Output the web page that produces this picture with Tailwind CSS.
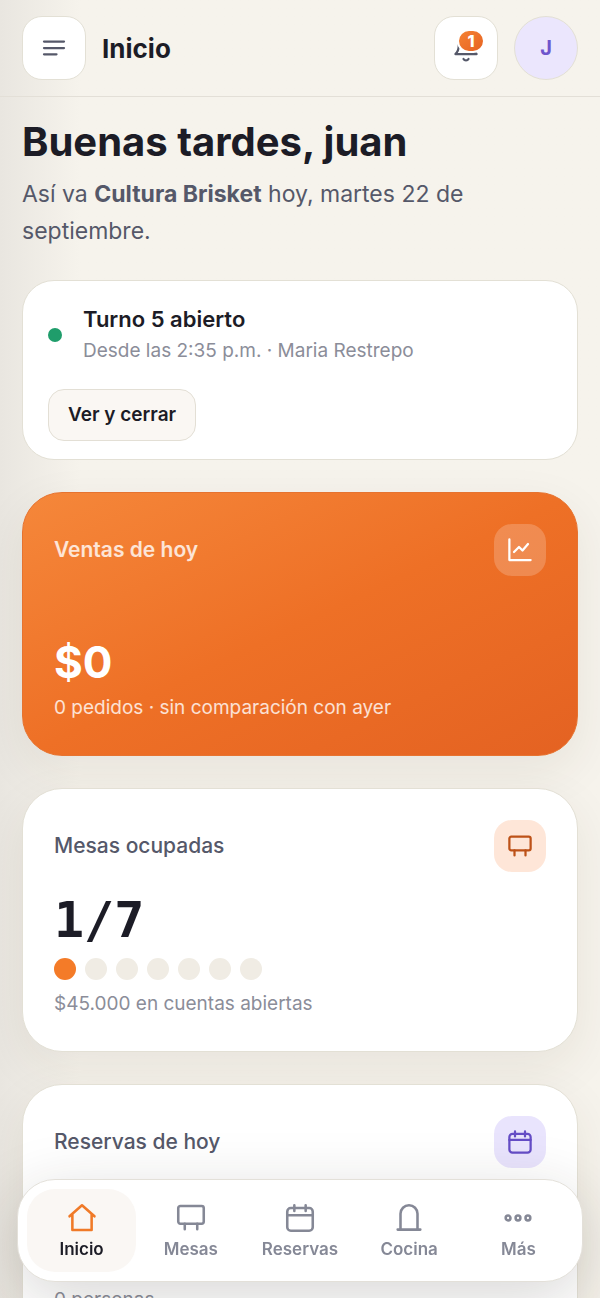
<!DOCTYPE html>
<html lang="es">
<head>
    <meta charset="UTF-8">
    <meta name="viewport" content="width=device-width, initial-scale=1.0">
    <title>Inicio</title>
    <script src="https://cdn.jsdelivr.net/npm/@tailwindcss/browser@4"></script>
</head>
<body class="h-screen overflow-hidden flex flex-col bg-[#f6f3ec] bg-linear-to-r from-[#e9e6e0] to-[#f6f3ec] to-[80px] font-['Inter',sans-serif] text-[#1c1c26]">
    <header class="shrink-0 flex items-center gap-4 px-[22px] py-4 border-b border-[#e3dfd7]">
        <button type="button" aria-label="Menú" class="size-16 rounded-[20px] bg-white border border-[#e3e0d5] flex items-center justify-center text-[#555869]">
            <svg class="size-[30px]" viewBox="0 0 24 24" fill="none" stroke="currentColor" stroke-width="1.8" stroke-linecap="round"><path d="M4 6.800h16M4 12h16M4 17h10"/></svg>
        </button>
        <span class="text-[26px] font-bold">Inicio</span>
        <div class="ml-auto flex gap-4">
            <button type="button" aria-label="Notificaciones" class="relative size-16 rounded-[20px] bg-white border border-[#e3e0d5] flex items-center justify-center text-[#555869]">
                <svg class="size-[30px]" viewBox="0 0 24 24" fill="none" stroke="currentColor" stroke-width="1.8" stroke-linecap="round" stroke-linejoin="round"><path d="M6.200 10a5.800 5.800 0 0 1 11.600 0c0 4.500 2.700 6.800 2.700 6.800h-17S6.200 14.500 6.200 10ZM10 20.800a2.300 2.300 0 0 0 4 0"/></svg>
                <span class="absolute top-3 right-3 h-6 w-7 rounded-full border-2 border-white bg-linear-to-br from-[#f58233] to-[#e66322] text-white text-base font-extrabold flex items-center justify-center">1</span>
            </button>
            <button type="button" class="size-16 rounded-full bg-[#ebe6fd] border border-[#e3e0d5] text-[#6d55cc] text-xl font-bold">J</button>
        </div>
    </header>

    <main class="flex-1 overflow-y-auto [scrollbar-width:none] px-[22px] pt-5 pb-32">
        <h1 class="text-[40px] leading-[50px] font-bold">Buenas tardes, juan</h1>
        <p class="mt-[9px] text-[23px] leading-[37px] text-[#555869]">Así va <strong class="font-bold">Cultura Brisket</strong> hoy, martes 22 de septiembre.</p>

        <div class="mt-[30px] flex flex-col gap-8">
            <section class="rounded-[32px] bg-white border border-[#e3e0d5] px-[25px] pt-[22px] pb-[18px] flex flex-col items-start gap-[22px]">
                <div class="flex items-center gap-[21px]">
                    <span class="size-3.5 rounded-full bg-[#1f9d6b]"></span>
                    <div>
                        <h2 class="text-[22px] leading-8 font-semibold">Turno 5 abierto</h2>
                        <p class="text-[19px] leading-8 text-[#8b8d99]">Desde las 2:35 p.m. · Maria Restrepo</p>
                    </div>
                </div>
                <button type="button" class="h-[52px] px-[19px] rounded-2xl bg-[#faf7f3] border border-[#e3dfd5] text-[19px] font-semibold">Ver y cerrar</button>
            </section>

            <section class="h-[264px] rounded-[40px] border border-[#e67330] bg-linear-to-br from-[#f5873a] via-[#ee7026] to-[#e46222] p-[31px] flex flex-col text-white shadow-[0_16px_48px_rgba(60,50,30,0.08)]">
                <div class="flex items-center justify-between">
                    <h2 class="text-[21px] font-semibold text-white/80">Ventas de hoy</h2>
                    <span class="size-[52px] rounded-[18px] bg-white/20 flex items-center justify-center">
                        <svg class="size-[30px]" viewBox="0 0 24 24" fill="none" stroke="currentColor" stroke-width="1.8" stroke-linecap="round" stroke-linejoin="round"><path d="M3.500 3.500V20h17M7.200 13.600l4-4 2.800 2.800 4.400-5.200"/></svg>
                    </span>
                </div>
                <div class="mt-auto text-[44px] leading-[60px] font-bold">$0</div>
                <p class="text-[19px] leading-8 text-white/80">0 pedidos · sin comparación con ayer</p>
            </section>

            <section class="rounded-[40px] bg-white border border-[#e3e0d5] p-[31px] shadow-[0_16px_48px_rgba(60,50,30,0.08)]">
                <div class="flex items-center justify-between">
                    <h2 class="text-[21px] font-medium text-[#555869]">Mesas ocupadas</h2>
                    <span class="size-[52px] rounded-[18px] bg-[#fee6d8] text-[#bd5218] flex items-center justify-center">
                        <svg class="size-[30px]" viewBox="0 0 24 24" fill="none" stroke="currentColor" stroke-width="1.8" stroke-linecap="round" stroke-linejoin="round"><rect x="3.500" y="4.500" width="17" height="11" rx="1.500"/><path d="M7.600 15.500v4M16.400 15.500v4"/></svg>
                    </span>
                </div>
                <div class="mt-[18px] text-[50px] leading-[60px] font-bold font-['DejaVu_Sans_Mono',monospace]">1/7</div>
                <div class="mt-2 flex gap-[9px]">
                    <span class="size-[22px] rounded-full bg-[#f47b28]"></span>
                    <span class="size-[22px] rounded-full bg-[#f0ece4]"></span>
                    <span class="size-[22px] rounded-full bg-[#f0ece4]"></span>
                    <span class="size-[22px] rounded-full bg-[#f0ece4]"></span>
                    <span class="size-[22px] rounded-full bg-[#f0ece4]"></span>
                    <span class="size-[22px] rounded-full bg-[#f0ece4]"></span>
                    <span class="size-[22px] rounded-full bg-[#f0ece4]"></span>
                </div>
                <p class="mt-2 text-[19px] leading-8 text-[#8b8d99]">$45.000 en cuentas abiertas</p>
            </section>

            <section class="h-[264px] rounded-[40px] bg-white border border-[#e3e0d5] p-[31px] flex flex-col justify-between shadow-[0_16px_48px_rgba(60,50,30,0.08)]">
                <div class="flex items-center justify-between">
                    <h2 class="text-[21px] font-medium text-[#555869]">Reservas de hoy</h2>
                    <span class="size-[52px] rounded-[18px] bg-[#e9e4fd] text-[#654dc6] flex items-center justify-center">
                        <svg class="size-[30px]" viewBox="0 0 24 24" fill="none" stroke="currentColor" stroke-width="1.8" stroke-linecap="round" stroke-linejoin="round"><rect x="3.500" y="5.500" width="17" height="15" rx="2.500"/><path d="M3.500 10.300h17M8 3.500v4M16 3.500v4"/></svg>
                    </span>
                </div>
                <p class="text-[19px] leading-8 text-[#8b8d99]">0 personas</p>
            </section>
        </div>
    </main>

    <nav class="fixed inset-x-[17px] bottom-4 grid grid-cols-5 p-[9px] rounded-[38px] bg-white border border-[#e3e0d9] text-[17px] leading-6 font-semibold text-[#858896] shadow-[0_16px_64px_rgba(40,35,30,0.18)]">
        <a href="#inicio" aria-current="page" class="h-[83px] rounded-[28px] bg-[#faf7f4] text-[#1c1c26] flex flex-col items-center justify-center gap-0.5">
            <svg class="size-[34px] text-[#f07a28]" viewBox="0 0 24 24" fill="none" stroke="currentColor" stroke-width="1.8" stroke-linecap="round" stroke-linejoin="round"><path d="M3.200 10.800 12 3l8.800 7.800M5.200 9.300v11.200h13.600V9.300"/></svg>
            Inicio
        </a>
        <a href="#mesas" class="h-[83px] flex flex-col items-center justify-center gap-0.5">
            <svg class="size-[34px]" viewBox="0 0 24 24" fill="none" stroke="currentColor" stroke-width="1.8" stroke-linecap="round" stroke-linejoin="round"><rect x="3" y="3.500" width="18" height="12.500" rx="1.500"/><path d="M7.600 16v4M16.400 16v4"/></svg>
            Mesas
        </a>
        <a href="#reservas" class="h-[83px] flex flex-col items-center justify-center gap-0.5">
            <svg class="size-[34px]" viewBox="0 0 24 24" fill="none" stroke="currentColor" stroke-width="1.8" stroke-linecap="round" stroke-linejoin="round"><rect x="3" y="5" width="18" height="16" rx="2.500"/><path d="M3 10h18M8 3v4M16 3v4"/></svg>
            Reservas
        </a>
        <a href="#cocina" class="h-[83px] flex flex-col items-center justify-center gap-0.5">
            <svg class="size-[34px]" viewBox="0 0 24 24" fill="none" stroke="currentColor" stroke-width="1.8" stroke-linecap="round" stroke-linejoin="round"><path d="M6 20V9a6 6 0 0 1 12 0v11M4 20.200h16"/></svg>
            Cocina
        </a>
        <a href="#mas" class="h-[83px] flex flex-col items-center justify-center gap-0.5">
            <svg class="size-[34px]" viewBox="0 0 24 24" fill="none" stroke="currentColor" stroke-width="1.8"><circle cx="5" cy="12" r="1.700"/><circle cx="12" cy="12" r="1.700"/><circle cx="19" cy="12" r="1.700"/></svg>
            Más
        </a>
    </nav>
</body>
</html>
